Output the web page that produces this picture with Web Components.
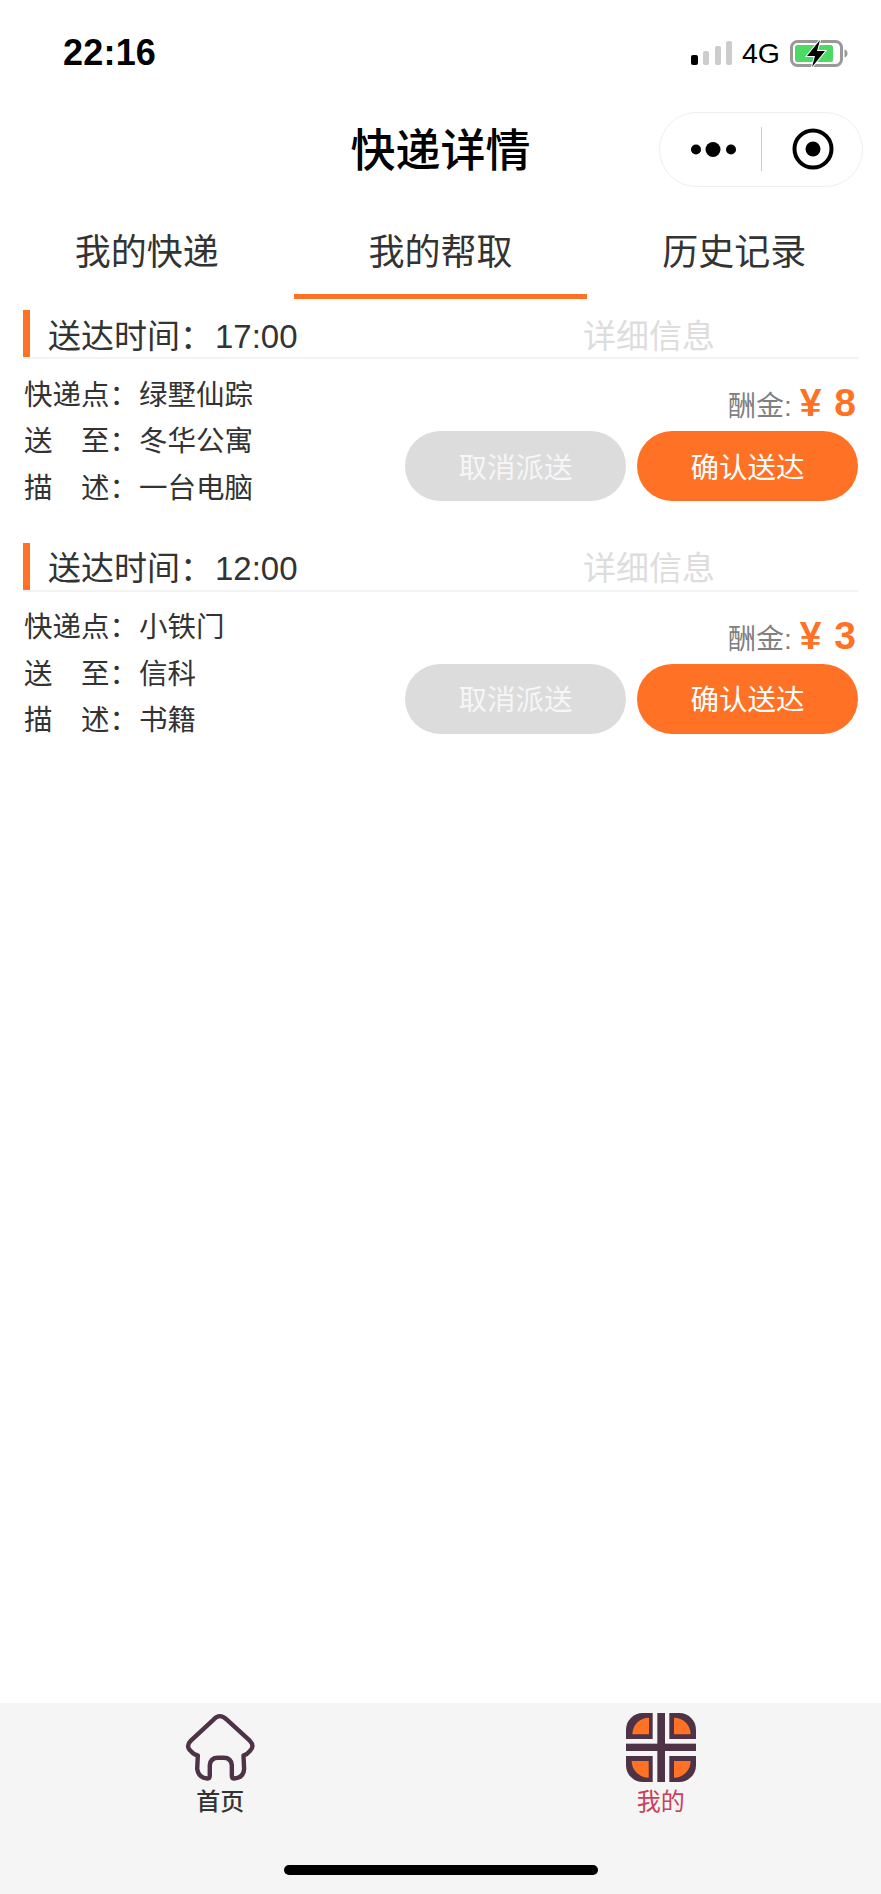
<!DOCTYPE html>
<html lang="zh-CN">
<head>
<meta charset="utf-8">
<title>快递详情</title>
<style>
html,body{margin:0;padding:0;background:#fff}
body{font-family:"Liberation Sans","Noto Sans CJK SC",sans-serif;color:#333}
</style>
</head>
<body>
<app-page>
  <status-bar slot="status" time="22:16" net="4G"></status-bar>
  <nav-bar slot="nav">快递详情</nav-bar>
  <tab-strip slot="tabs">
    <tab-item>我的快递</tab-item>
    <tab-item active>我的帮取</tab-item>
    <tab-item>历史记录</tab-item>
  </tab-strip>
  <delivery-card time="17:00" from="绿墅仙踪" to="冬华公寓" desc="一台电脑" reward="8"></delivery-card>
  <delivery-card time="12:00" from="小铁门" to="信科" desc="书籍" reward="3"></delivery-card>
  <bottom-bar slot="bottom"></bottom-bar>
</app-page>
<script>
function def(name, html){
  customElements.define(name, class extends HTMLElement{
    constructor(){super();this.attachShadow({mode:"open"});}
    connectedCallback(){
      const get=k=>this.getAttribute(k)||"";
      this.shadowRoot.innerHTML=typeof html==="function"?html(get):html;
    }
  });
}
def("app-page",`<style>
:host{display:flex;flex-direction:column;width:881px;height:1894px;overflow:hidden;background:#fff}
main{flex:1;display:flex;flex-direction:column;padding-top:11px;gap:34px}
</style>
<slot name="status"></slot><slot name="nav"></slot><slot name="tabs"></slot>
<main><slot></slot></main>
<slot name="bottom"></slot>`);

def("status-bar",g=>`<style>
:host{display:flex;align-items:center;justify-content:space-between;height:88px;box-sizing:border-box;padding:18px 33px 0 63px;font-family:"Liberation Sans",sans-serif;color:#000}
.t{font-size:36px;font-weight:700;letter-spacing:.2px;line-height:60px}
.r{display:flex;align-items:center}
.n{font-size:28.500px;line-height:30px;margin:0 10px 0 10px}
svg{display:block}
</style>
<span class="t">${g("time")}</span>
<div class="r">
<svg width="41" height="24" viewBox="0 0 41 24"><rect x="0" y="14" width="7" height="10" rx="2" fill="#000"/><rect x="12" y="10" width="6" height="14" rx="2" fill="#ccc"/><rect x="24" y="5" width="6" height="19" rx="2" fill="#ccc"/><rect x="35" y="0" width="6" height="24" rx="2" fill="#ccc"/></svg>
<span class="n">${g("net")}</span>
<svg width="58" height="27" viewBox="0 0 58 27"><rect x="1.500" y="1.500" width="50" height="24" rx="6" fill="#fff" stroke="#999" stroke-width="3"/><rect x="5" y="5" width="38" height="17" rx="2.500" fill="#4cd964"/><path d="M54.500 9.500c2 .5 3 2 3 4s-1 3.500-3 4z" fill="#999"/><path d="M30 0 17 16h8l-3 11 13-16h-8z" fill="#000" stroke="#fff" stroke-width="2" stroke-linejoin="miter" paint-order="stroke"/></svg>
</div>`);

def("nav-bar",`<style>
:host{display:flex;align-items:center;justify-content:center;position:relative;box-sizing:border-box;height:124px;padding-bottom:6px;font-size:45px;font-weight:500;color:#000;font-family:"Noto Sans CJK SC",sans-serif}
.cap{position:absolute;left:659px;top:24px;width:204px;height:75px;box-sizing:border-box;border:1px solid #eee;border-radius:38px;background:#fff}
svg{position:absolute;left:-1px;top:-1px}
</style>
<slot></slot>
<div class="cap"><svg width="204" height="74" viewBox="0 0 204 74">
<circle cx="37" cy="37.500" r="5" fill="#000"/><circle cx="54" cy="37.500" r="7.500" fill="#000"/><circle cx="72" cy="37.500" r="5" fill="#000"/>
<rect x="102" y="15" width="1" height="44" fill="#ccc"/>
<circle cx="154" cy="37" r="18.500" fill="none" stroke="#000" stroke-width="4"/><circle cx="154" cy="37" r="7.500" fill="#000"/>
</svg></div>`);

def("tab-strip",`<style>
:host{display:grid;grid-template-columns:repeat(3,1fr);height:87px}
</style><slot></slot>`);

def("tab-item",`<style>
:host{display:flex;align-items:center;justify-content:center;box-sizing:border-box;height:87px;padding-bottom:8px;border-bottom:5px solid transparent;font-size:36px;color:#333;font-family:"Noto Sans CJK SC",sans-serif}
:host([active]){border-bottom-color:#ff7124}
</style><slot></slot>`);

def("delivery-card",g=>`<style>
:host{display:block;margin:0 23px 0 23px;color:#333;font-family:"Liberation Sans","Noto Sans CJK SC",sans-serif}
.h{display:flex;align-items:center;height:49px;box-sizing:border-box;border-bottom:2px solid #f3f3f3;font-size:33px}
.bar{width:7px;height:47px;background:#ff7124;margin-right:18px;flex:none}
.time{width:535px;flex:none;white-space:pre}
.time i{font-style:normal;margin-left:2px}
.more{color:#ddd;font-family:"Noto Sans CJK SC",sans-serif}
.b{display:flex;justify-content:space-between}
.rows{margin:10px 0 0 1px;font-size:28.500px}
.row{display:flex;height:46.500px;align-items:center;white-space:pre}
.l{width:115px}
.right{display:flex;flex-direction:column;align-items:flex-end;padding-top:20px}
.rw{height:46px;display:flex;align-items:baseline;font-size:28px;color:#808080;line-height:47px}
.rw b{color:#ff7124;font-size:39px;font-weight:700;margin:0 2px 0 8px;word-spacing:2px;white-space:pre;font-family:"Liberation Sans",sans-serif}
.btns{display:flex;gap:11px;margin-top:6px}
.btn{width:221px;height:70px;box-sizing:border-box;padding-bottom:2px;border-radius:35px;display:flex;align-items:center;justify-content:center;font-size:28.500px;color:#fff;background:#ff7124}
.btn.off{background:#dcdcdc;color:#f6f6f6}
</style>
<div class="h"><span class="bar"></span><span class="time">送达时间：<i>${g("time")}</i></span><span class="more">详细信息</span></div>
<div class="b">
<div class="rows">
<div class="row"><span class="l">快递点：</span><span>${g("from")}</span></div>
<div class="row"><span class="l">送　至：</span><span>${g("to")}</span></div>
<div class="row"><span class="l">描　述：</span><span>${g("desc")}</span></div>
</div>
<div class="right">
<div class="rw"><span>酬金:</span><b>¥ ${g("reward")}</b></div>
<div class="btns"><div class="btn off">取消派送</div><div class="btn">确认送达</div></div>
</div>
</div>`);

def("bottom-bar",`<style>
:host{display:flex;flex-direction:column;height:191px;background:#f5f5f5;font-family:"Noto Sans CJK SC",sans-serif}
.items{display:grid;grid-template-columns:1fr 1fr;padding-top:8px}
.it{display:flex;flex-direction:column;align-items:center;font-size:24px;line-height:32px;color:#333;font-weight:500}
.it.on{color:#c9405a;font-weight:400}
svg{display:block;margin-bottom:1px}
.it.on svg{margin:2px 0 2px}
.ind{width:314px;height:10px;border-radius:5px;background:#000;margin:auto auto 19px}
</style>
<div class="items">
<div class="it">
<svg width="75" height="72" viewBox="100 62 224 216"><path transform="translate(212 170) scale(.945) translate(-212 -170)" d="M210 72Q220 72 232 83L305 150Q322 167 305 183 295 195 285 197L287 240Q285 268 255 270 248 270 248 262V228Q246 204 222 204H204Q180 204 178 228V262Q178 270 170 270 142 268 138 240L140 197Q128 195 118 183 100 167 118 150L190 83Q200 72 210 72Z" fill="none" stroke="#4d3345" stroke-width="14" stroke-linejoin="round"/></svg>
<span>首页</span></div>
<div class="it on">
<svg width="70" height="69" viewBox="78 68 210 207">
<path d="M158 68v78H78v-28a50 50 0 0 1 50-50z" fill="#4d3345"/><path d="M147 82v50H97a50 50 0 0 1 50-50z" fill="#ff7124"/>
<path d="M208 68v78h80v-28a50 50 0 0 0-50-50z" fill="#4d3345"/><path d="M222 82v50h50a50 50 0 0 0-50-50z" fill="#ff7124"/>
<path d="M158 275v-78H78v28a50 50 0 0 0 50 50z" fill="#4d3345"/><path d="M95 212h51v50a51 50 0 0 1-51-50z" fill="#ff7124"/>
<path d="M208 275v-78h80v28a50 50 0 0 1-50 50z" fill="#4d3345"/><path d="M222 212h50a50 50 0 0 1-50 50z" fill="#ff7124"/>
<rect x="172" y="68" width="23" height="207" fill="#4d3345"/><rect x="78" y="160" width="210" height="22" fill="#4d3345"/>
</svg>
<span>我的</span></div>
</div>
<div class="ind"></div>`);
</script>
</body>
</html>
